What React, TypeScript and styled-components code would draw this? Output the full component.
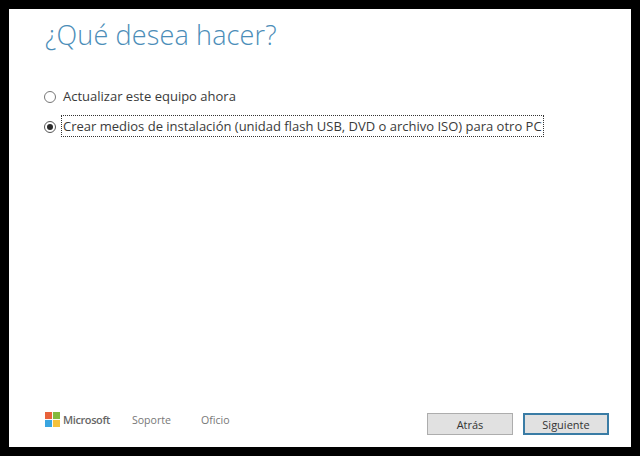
import React from 'react'
import styled, { createGlobalStyle } from 'styled-components'

const Global = createGlobalStyle`
	html, body {
		margin: 0;
		padding: 0;
		background: #000;
	}
	body {
		font-family: 'Open Sans', 'Noto Sans', sans-serif;
	}
`

const Frame = styled.div`
	box-sizing: border-box;
	width: 640px;
	height: 456px;
	padding: 9px;
	background: #000;
`

const Window = styled.main`
	box-sizing: border-box;
	height: 100%;
	background: #fff;
	padding: 0 22px 11px 36px;
	display: flex;
	flex-direction: column;
`

const Title = styled.h1`
	margin: 6px 0 0;
	font-size: 27px;
	line-height: 40px;
	font-weight: 300;
	color: #4b8db8;
	letter-spacing: 0.15px;
`

const Options = styled.div`
	margin: 30px 0 0 -1px;
	display: flex;
	flex-direction: column;
	gap: 8px;
	flex: 1;
`

const Option = styled.div`
	display: flex;
	align-items: center;
	gap: 6px;
	height: 22px;
`

const Radio = styled.span<{ $checked?: boolean }>`
	box-sizing: border-box;
	width: 12px;
	height: 12px;
	margin-top: 1px;
	border-radius: 50%;
	border: 1px solid ${(p) => (p.$checked ? '#555' : '#777')};
	display: flex;
	align-items: center;
	justify-content: center;
	flex: none;
	&::after {
		content: '';
		display: ${(p) => (p.$checked ? 'block' : 'none')};
		width: 6px;
		height: 6px;
		border-radius: 50%;
		background: #2a2a2a;
	}
`

const OptionLabel = styled.span<{ $focused?: boolean }>`
	box-sizing: border-box;
	font-size: 13px;
	line-height: 20px;
	height: 22px;
	color: #3a3a3a;
	white-space: nowrap;
	padding: 0 1.5px 0 1px;
	margin-left: -1px;
	border: 1px ${(p) => (p.$focused ? 'dotted #333' : 'solid transparent')};
`

const Footer = styled.footer`
	display: flex;
	align-items: center;
	justify-content: space-between;
`

const FooterLinks = styled.div`
	display: flex;
	align-items: center;
	margin-bottom: 9px;
`

const Brand = styled.div`
	display: flex;
	align-items: center;
	gap: 3px;
	margin-right: 22px;
`

const BrandName = styled.span`
	font-size: 11px;
	font-weight: 600;
	letter-spacing: -0.4px;
	color: #666;
`

const FooterLink = styled.span`
	font-size: 10.6px;
	color: #777;
	margin-right: 30px;
`

const Buttons = styled.div`
	display: flex;
	gap: 10px;
`

const Button = styled.button<{ $primary?: boolean }>`
	box-sizing: border-box;
	width: 86px;
	height: 22px;
	padding: 0;
	font-family: inherit;
	font-size: 11px;
	color: #333;
	background: #e1e1e1;
	border: ${(p) => (p.$primary ? '2px solid #3a7ca5' : '1px solid #adadad')};
`

const MicrosoftLogo = () => (
	<svg width="15" height="15" viewBox="0 0 16 16">
		<rect x="0" y="0" width="7.5" height="7.5" fill="#e8623a" />
		<rect x="8.5" y="0" width="7.5" height="7.5" fill="#82b93c" />
		<rect x="0" y="8.5" width="7.5" height="7.5" fill="#3aa5e0" />
		<rect x="8.5" y="8.5" width="7.5" height="7.5" fill="#f5c23c" />
	</svg>
)

export default function App() {
	return (
		<Frame>
			<Global />
			<Window>
				<Title>¿Qué desea hacer?</Title>
				<Options>
					<Option>
						<Radio />
						<OptionLabel>Actualizar este equipo ahora</OptionLabel>
					</Option>
					<Option>
						<Radio $checked />
						<OptionLabel $focused>
							Crear medios de instalación (unidad flash USB, DVD o archivo ISO) para otro PC
						</OptionLabel>
					</Option>
				</Options>
				<Footer>
					<FooterLinks>
						<Brand>
							<MicrosoftLogo />
							<BrandName>Microsoft</BrandName>
						</Brand>
						<FooterLink>Soporte</FooterLink>
						<FooterLink>Oficio</FooterLink>
					</FooterLinks>
					<Buttons>
						<Button>Atrás</Button>
						<Button $primary>Siguiente</Button>
					</Buttons>
				</Footer>
			</Window>
		</Frame>
	)
}
